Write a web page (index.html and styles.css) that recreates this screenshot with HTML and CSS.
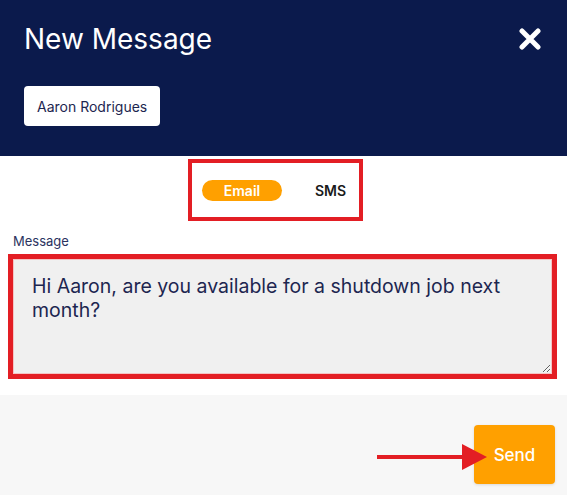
FILE: index.html
```html
<!DOCTYPE html>
<html lang="en">
<head>
  <meta charset="UTF-8" />
  <meta name="viewport" content="width=device-width, initial-scale=1.0" />
  <title>New Message</title>
  <link rel="stylesheet" href="styles.css">
</head>
<body>
  <div class="header">
    <div class="header-top">
      <h1>New Message</h1>
      <button class="close-btn" aria-label="Close">
        <svg width="22" height="22" viewBox="0 0 22 22">
          <path d="M3 3 L19 19 M19 3 L3 19" stroke="#fff" stroke-width="5" stroke-linecap="round" />
        </svg>
      </button>
    </div>
    <div class="chip">Aaron Rodrigues</div>
  </div>

  <div class="compose">
    <div class="toggle">
      <span class="toggle-option active">Email</span>
      <span class="toggle-option">SMS</span>
    </div>
    <label class="field-label" for="message">Message</label>
    <div class="highlight">
      <textarea id="message">Hi Aaron, are you available for a shutdown job next month?</textarea>
    </div>
  </div>

  <div class="footer">
    <svg class="arrow" width="110" height="26" viewBox="0 0 110 26">
      <rect x="0" y="11" width="88" height="4" fill="#e31e24" />
      <polygon points="85,0 110,13 85,26" fill="#e31e24" />
    </svg>
    <button class="send-btn">Send</button>
  </div>
</body>
</html>
```

FILE: styles.css
```css
body {
  margin: 0;
  font-family: Inter, "Noto Sans", sans-serif;
  background: #ffffff;
  color: #1d2650;
}
.header {
  background: #0b1a4c;
  padding: 22px 24px 30px 24px;
  height: 104px;
}
.header-top {
  display: flex;
  justify-content: space-between;
  align-items: center;
}
h1 {
  margin: 0;
  font-size: 28px;
  font-weight: 400;
  color: #ffffff;
  line-height: 34px;
}
.close-btn {
  background: none;
  border: none;
  padding: 0;
  margin-right: 2px;
  width: 22px;
  height: 22px;
  cursor: pointer;
}
.chip {
  display: inline-flex;
  align-items: center;
  margin-top: 30px;
  height: 40px;
  padding: 0 13px;
  background: #ffffff;
  border-radius: 4px;
  font-size: 14px;
  color: #1d2650;
}
.compose {
  padding: 3px 10px 16px 8px;
}
.toggle {
  display: flex;
  align-items: center;
  gap: 33px;
  width: 175px;
  height: 62px;
  box-sizing: border-box;
  margin-left: 180px;
  padding: 0 18px 0 10px;
  border: 4px solid #e31e24;
}
.toggle-option {
  font-size: 14px;
  font-weight: 600;
  color: #1a1a1a;
}
.toggle-option.active {
  flex: 0 0 80px;
  background: #ffa000;
  color: #ffffff;
  height: 21px;
  line-height: 21px;
  text-align: center;
  border-radius: 11px;
}
.field-label {
  display: block;
  margin: 12px 0 5px 5px;
  font-size: 13px;
  color: #2b3360;
}
.highlight {
  border: 5px solid #e31e24;
  height: 115px;
}
.highlight textarea {
  display: block;
  width: 100%;
  height: 100%;
  box-sizing: border-box;
  margin: 0;
  border: 1px solid #f4c4c4;
  background: #f0f0f0;
  padding: 14px 18px;
  font-family: inherit;
  font-size: 19.5px;
  line-height: 24px;
  color: #1d2650;
  outline: none;
}
.footer {
  position: relative;
  background: #f7f7f7;
  height: 101px;
  display: flex;
  justify-content: flex-end;
  align-items: flex-start;
  padding: 30px 12px 0 0;
  box-sizing: border-box;
}
.arrow {
  position: absolute;
  left: 377px;
  top: 49px;
}
.send-btn {
  width: 81px;
  height: 59px;
  border: none;
  border-radius: 4px;
  background: #ffa000;
  color: #ffffff;
  font-family: inherit;
  font-size: 17px;
  font-weight: 500;
  box-shadow: 0 1px 3px rgba(0, 0, 0, 0.12);
  cursor: pointer;
}
```
